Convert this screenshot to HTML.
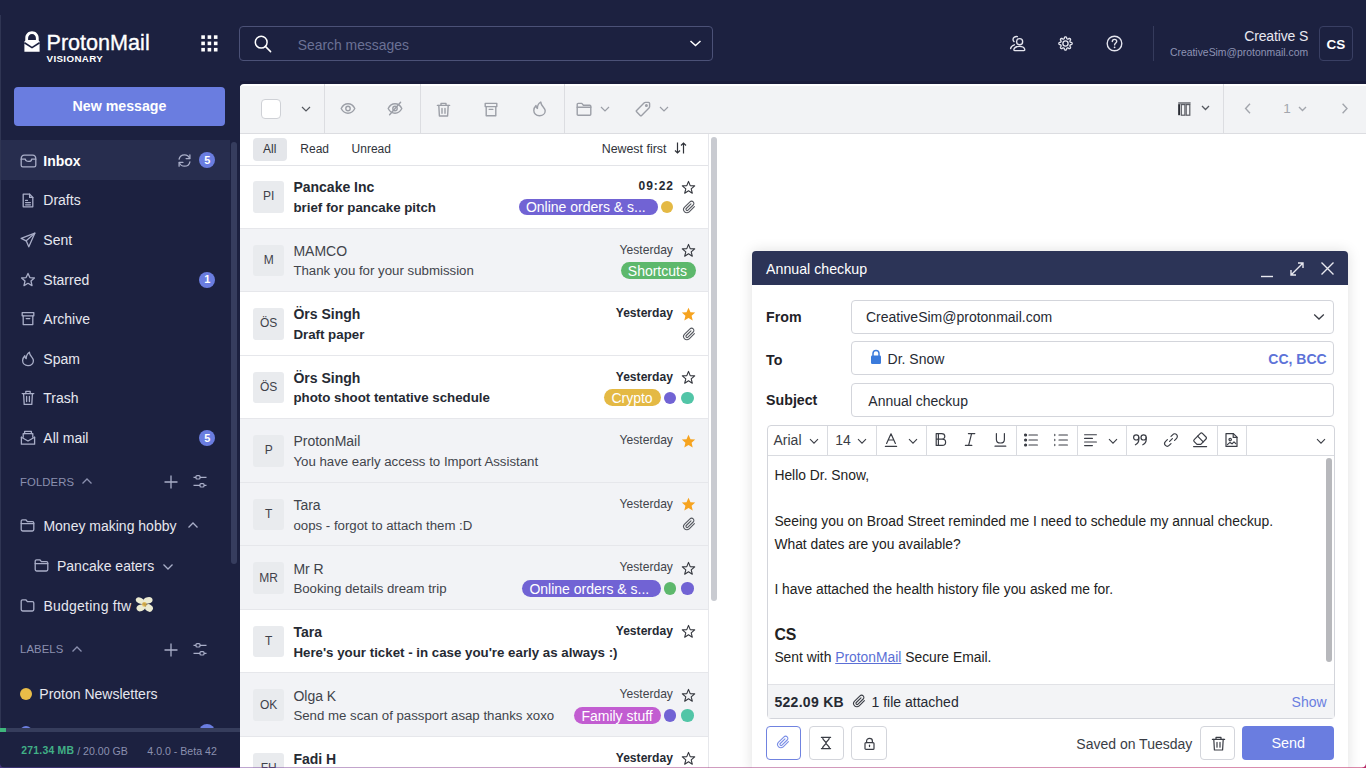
<!DOCTYPE html>
<html><head><meta charset="utf-8">
<style>
*{box-sizing:border-box;margin:0;padding:0}
html,body{width:1366px;height:768px;overflow:hidden;font-family:"Liberation Sans",sans-serif;background:#1c2140;position:relative}
.abs{position:absolute}
svg{display:block}
.t{position:absolute;white-space:nowrap;line-height:1}
</style></head>
<body>
<div class="abs" style="left:0px;top:0px;width:1366px;height:84px;background:#1c2140;"></div>
<svg class="abs" style="left:24px;top:31px;" width="16" height="21" viewBox="0 0 16 21"><path d="M8 0.3C4.2 0.3 1.3 3.2 1.3 6.9V9.6L0.4 10.4V20.7H15.6V10.4L14.7 9.6V6.9C14.7 3.2 11.8 0.3 8 0.3Z" fill="#fff"/>
  <path d="M4.1 8.9V7.1C4.1 4.9 5.8 3.1 8 3.1C10.2 3.1 11.9 4.9 11.9 7.1V8.9Z" fill="#1c2140"/>
  <path d="M0.4 11.8L8 16.6L15.6 11.8" stroke="#1c2140" stroke-width="1.7" fill="none"/></svg>
<div class="t" style="left:46.50px;top:31.92px;font-size:21.6px;color:#fff;font-weight:normal;letter-spacing:0px;-webkit-text-stroke:0.35px #fff">ProtonMail</div>
<div class="t" style="left:46.50px;top:53.50px;font-size:9.8px;color:#fff;font-weight:bold;letter-spacing:0.35px">VISIONARY</div>
<svg class="abs" style="left:201px;top:35px;" width="17" height="17" viewBox="0 0 17 17"><g fill="#fff"><rect x="0.3" y="0.3" width="3.6" height="3.6"/><rect x="6.6" y="0.3" width="3.6" height="3.6"/><rect x="12.9" y="0.3" width="3.6" height="3.6"/><rect x="0.3" y="6.6" width="3.6" height="3.6"/><rect x="6.6" y="6.6" width="3.6" height="3.6"/><rect x="12.9" y="6.6" width="3.6" height="3.6"/><rect x="0.3" y="12.9" width="3.6" height="3.6"/><rect x="6.6" y="12.9" width="3.6" height="3.6"/><rect x="12.9" y="12.9" width="3.6" height="3.6"/></g></svg>
<div class="abs" style="left:239px;top:26px;width:474px;height:35px;border:1px solid #4b5177;border-radius:4px"></div>
<svg class="abs" style="left:254px;top:35px;" width="18" height="18" viewBox="0 0 18 18"><g fill="none" stroke="#fff" stroke-width="1.5"><circle cx="7.2" cy="7.2" r="5.9"/><path d="M11.4 11.4L16.6 16.6" stroke-linecap="round"/></g></svg>
<div class="t" style="left:297.70px;top:39.23px;font-size:13.9px;color:#6b7195;font-weight:normal;">Search messages</div>
<svg class="abs" style="left:689px;top:39px;" width="13" height="9" viewBox="0 0 13 9"><path d="M1.5 2L6.5 6.5L11.5 2" fill="none" stroke="#fff" stroke-width="1.5"/></svg>
<svg class="abs" style="left:1009px;top:35px;" width="18" height="17" viewBox="0 0 18 17"><g fill="none" stroke="#e4e5ee" stroke-width="1.35" stroke-linecap="round">
      <circle cx="10.6" cy="6.7" r="3.05"/><path d="M5.8 15.6H14.8C15.6 15.6 16 15 15.7 14.2C15.1 12.4 13.2 11.4 10.3 11.4C7.4 11.4 5.5 12.4 4.9 14.2C4.6 15 5 15.6 5.8 15.6Z"/>
      <path d="M8.4 1.6C6.2 1.0 4.0 2.6 4.0 4.6C4.0 5.6 4.4 6.2 5.0 6.6"/><path d="M5.4 9.8C3.4 10.4 1.9 11.6 1.6 13.6"/></g></svg>
<svg class="abs" style="left:1057.2px;top:34.8px;" width="17" height="17" viewBox="0 0 17 17"><g fill="none" stroke="#e4e5ee" stroke-width="1.35" stroke-linejoin="round">
      <path d="M15.15 8.50 L15.12 8.76 L15.03 9.01 L14.88 9.25 L14.65 9.47 L14.14 9.62 L13.63 9.73 L13.39 9.88 L13.21 10.03 L13.07 10.19 L12.98 10.36 L12.93 10.54 L12.91 10.75 L12.93 10.98 L13.00 11.26 L13.28 11.69 L13.53 12.16 L13.54 12.48 L13.48 12.75 L13.37 13.00 L13.20 13.20 L13.00 13.37 L12.75 13.48 L12.48 13.54 L12.16 13.53 L11.69 13.28 L11.26 13.00 L10.98 12.93 L10.75 12.91 L10.54 12.93 L10.36 12.98 L10.19 13.07 L10.03 13.21 L9.88 13.39 L9.73 13.63 L9.62 14.14 L9.47 14.65 L9.25 14.88 L9.01 15.03 L8.76 15.12 L8.50 15.15 L8.24 15.12 L7.99 15.03 L7.75 14.88 L7.53 14.65 L7.38 14.14 L7.27 13.63 L7.12 13.39 L6.97 13.21 L6.81 13.07 L6.64 12.98 L6.46 12.93 L6.25 12.91 L6.02 12.93 L5.74 13.00 L5.31 13.28 L4.84 13.53 L4.52 13.54 L4.25 13.48 L4.00 13.37 L3.80 13.20 L3.63 13.00 L3.52 12.75 L3.46 12.48 L3.47 12.16 L3.72 11.69 L4.00 11.26 L4.07 10.98 L4.09 10.75 L4.07 10.54 L4.02 10.36 L3.93 10.19 L3.79 10.03 L3.61 9.88 L3.37 9.73 L2.86 9.62 L2.35 9.47 L2.12 9.25 L1.97 9.01 L1.88 8.76 L1.85 8.50 L1.88 8.24 L1.97 7.99 L2.12 7.75 L2.35 7.53 L2.86 7.38 L3.37 7.27 L3.61 7.12 L3.79 6.97 L3.93 6.81 L4.02 6.64 L4.07 6.46 L4.09 6.25 L4.07 6.02 L4.00 5.74 L3.72 5.31 L3.47 4.84 L3.46 4.52 L3.52 4.25 L3.63 4.00 L3.80 3.80 L4.00 3.63 L4.25 3.52 L4.52 3.46 L4.84 3.47 L5.31 3.72 L5.74 4.00 L6.02 4.07 L6.25 4.09 L6.46 4.07 L6.64 4.02 L6.81 3.93 L6.97 3.79 L7.12 3.61 L7.27 3.37 L7.38 2.86 L7.53 2.35 L7.75 2.12 L7.99 1.97 L8.24 1.88 L8.50 1.85 L8.76 1.88 L9.01 1.97 L9.25 2.12 L9.47 2.35 L9.62 2.86 L9.73 3.37 L9.88 3.61 L10.03 3.79 L10.19 3.93 L10.36 4.02 L10.54 4.07 L10.75 4.09 L10.98 4.07 L11.26 4.00 L11.69 3.72 L12.16 3.47 L12.48 3.46 L12.75 3.52 L13.00 3.63 L13.20 3.80 L13.37 4.00 L13.48 4.25 L13.54 4.52 L13.53 4.84 L13.28 5.31 L13.00 5.74 L12.93 6.02 L12.91 6.25 L12.93 6.46 L12.98 6.64 L13.07 6.81 L13.21 6.97 L13.39 7.12 L13.63 7.27 L14.14 7.38 L14.65 7.53 L14.88 7.75 L15.03 7.99 L15.12 8.24Z"/>
      <circle cx="8.5" cy="8.5" r="2.6"/></g></svg>
<svg class="abs" style="left:1106px;top:35px;" width="17" height="17" viewBox="0 0 17 17"><g fill="none" stroke="#e4e5ee" stroke-width="1.4" stroke-linecap="round">
      <circle cx="8.5" cy="8.5" r="7.3"/><path d="M6.3 6.6C6.3 5.3 7.3 4.4 8.5 4.4C9.7 4.4 10.7 5.3 10.7 6.5C10.7 8 8.6 8.2 8.6 9.9"/></g>
      <circle cx="8.6" cy="12.3" r="0.9" fill="#e4e5ee"/></svg>
<div class="abs" style="left:1153px;top:26px;width:1px;height:35px;background:#353b5c;"></div>
<div class="t" style="right:57.90px;top:29.15px;font-size:14px;color:#e8e8f0;font-weight:normal;letter-spacing:-0.15px">Creative S</div>
<div class="t" style="right:57.90px;top:48.00px;font-size:10.4px;color:#8e93b4;font-weight:normal;">CreativeSim@protonmail.com</div>
<div class="abs" style="left:1319px;top:26px;width:34px;height:35px;border:1px solid #393f63;border-radius:4px"></div>
<div class="t" style="left:1336.00px;transform:translateX(-50%);top:38.27px;font-size:13.5px;color:#fff;font-weight:bold;">CS</div>
<div class="abs" style="left:0px;top:84px;width:240px;height:684px;background:#1c2140;"></div>
<div class="abs" style="left:0px;top:15px;width:1px;height:753px;background:#2f3553;"></div>
<div class="abs" style="left:14px;top:87px;width:211px;height:39px;background:#6a7de0;border-radius:4px"></div>
<div class="t" style="left:119.50px;transform:translateX(-50%);top:98.98px;font-size:14.2px;color:#fff;font-weight:bold;">New message</div>
<div class="abs" style="left:1px;top:140px;width:229px;height:40px;background:#272d4e;"></div>
<div class="abs" style="left:231px;top:142px;width:6px;height:422px;background:#363d5e;border-radius:3px"></div>
<div class="t" style="left:43.30px;top:154.25px;font-size:14px;color:#fff;font-weight:bold;">Inbox</div>
<div class="t" style="left:43.30px;top:193.25px;font-size:14px;color:#e6e7ef;font-weight:normal;">Drafts</div>
<div class="t" style="left:43.30px;top:233.25px;font-size:14px;color:#e6e7ef;font-weight:normal;">Sent</div>
<div class="t" style="left:43.30px;top:272.75px;font-size:14px;color:#e6e7ef;font-weight:normal;">Starred</div>
<div class="t" style="left:43.30px;top:311.85px;font-size:14px;color:#e6e7ef;font-weight:normal;">Archive</div>
<div class="t" style="left:43.30px;top:351.75px;font-size:14px;color:#e6e7ef;font-weight:normal;">Spam</div>
<div class="t" style="left:43.30px;top:391.25px;font-size:14px;color:#e6e7ef;font-weight:normal;">Trash</div>
<div class="t" style="left:43.30px;top:431.25px;font-size:14px;color:#e6e7ef;font-weight:normal;">All mail</div>
<svg class="abs" style="left:20px;top:154px;stroke:#a9aec8" width="17" height="14" viewBox="0 0 17 14"><g fill="none" stroke="#a9aec8" stroke-width="1.3" stroke-linejoin="round" stroke-linecap="round"><path d="M1.2 5.2V11.2C1.2 12.2 1.8 12.8 2.8 12.8H14.2C15.2 12.8 15.8 12.2 15.8 11.2V5.2"/><path d="M1.2 5.2C1.2 3 2.4 1.2 4.4 1.2H12.6C14.6 1.2 15.8 3 15.8 5.2H11.6C11.6 6.4 10.4 7.4 8.5 7.4C6.6 7.4 5.4 6.4 5.4 5.2Z"/></g></svg>
<svg class="abs" style="left:21px;top:193px;" width="14" height="15" viewBox="0 0 14 15"><g fill="none" stroke="#a9aec8" stroke-width="1.3" stroke-linejoin="round" stroke-linecap="round"><path d="M2.2 1.2H8.6L11.8 4.4V13.8H2.2Z"/><path d="M8.6 1.2V4.4H11.8"/><path d="M4.6 7.4H6.4M4.6 9.6H9.4M4.6 11.8H9.4"/></g></svg>
<svg class="abs" style="left:20px;top:232px;" width="16" height="16" viewBox="0 0 16 16"><g fill="none" stroke="#a9aec8" stroke-width="1.3" stroke-linejoin="round" stroke-linecap="round"><path d="M14.8 1.2L1.2 6.4L6.2 8.8L8.8 14.8Z"/><path d="M14.8 1.2L6.2 8.8"/></g></svg>
<svg class="abs" style="left:20px;top:272px;" width="16" height="16" viewBox="0 0 16 16"><g fill="none" stroke="#a9aec8" stroke-width="1.3" stroke-linejoin="round" stroke-linecap="round"><path d="M8 1.4L9.9 5.6L14.4 6L11 9L12 13.6L8 11.3L4 13.6L5 9L1.6 6L6.1 5.6Z"/></g></svg>
<svg class="abs" style="left:21px;top:311px;" width="14" height="15" viewBox="0 0 14 15"><g fill="none" stroke="#a9aec8" stroke-width="1.3" stroke-linejoin="round" stroke-linecap="round"><rect x="1.2" y="1.6" width="11.6" height="3.2"/><path d="M2.2 4.8V13.6H11.8V4.8"/><path d="M5.2 7.6H8.8"/></g></svg>
<svg class="abs" style="left:21px;top:351px;" width="14" height="16" viewBox="0 0 14 16"><g fill="none" stroke="#a9aec8" stroke-width="1.3" stroke-linejoin="round" stroke-linecap="round"><path d="M7 14.6C3.8 14.6 1.6 12.4 1.6 9.6C1.6 7.4 2.6 6 3.8 4.8C3.8 6.4 4.4 7.2 5.2 7.6C5.2 4.6 6.6 2.4 8.4 1.2C8.4 3.4 9.6 4.8 10.8 6.2C11.8 7.4 12.4 8.4 12.4 9.8C12.4 12.6 10.2 14.6 7 14.6Z"/></g></svg>
<svg class="abs" style="left:21px;top:390px;" width="14" height="16" viewBox="0 0 14 16"><g fill="none" stroke="#a9aec8" stroke-width="1.3" stroke-linejoin="round" stroke-linecap="round"><path d="M1.2 3.6H12.8"/><path d="M4.8 3.6V1.4H9.2V3.6"/><path d="M2.6 3.6L3.2 14.4H10.8L11.4 3.6"/><path d="M5.6 6.4V11.6M8.4 6.4V11.6"/></g></svg>
<svg class="abs" style="left:20px;top:430px;" width="16" height="16" viewBox="0 0 16 16"><g fill="none" stroke="#a9aec8" stroke-width="1.3" stroke-linejoin="round" stroke-linecap="round"><path d="M1.4 7.2V14.2H14.6V7.2"/><path d="M1.4 7.2L8 11L14.6 7.2"/><path d="M3.2 7.2V3.6H12.8V7.2"/><path d="M4.6 3.6V1.4H11.4V3.6"/></g></svg>
<svg class="abs" style="left:177px;top:153px;" width="15" height="15" viewBox="0 0 15 15"><g fill="none" stroke="#a9aec8" stroke-width="1.3" stroke-linejoin="round" stroke-linecap="round"><path d="M12.6 5.4C11.8 3.2 9.8 1.8 7.5 1.8C4.8 1.8 2.6 3.7 2.1 6.2"/><path d="M12.9 1.8V5.6H9.1"/><path d="M2.4 9.6C3.2 11.8 5.2 13.2 7.5 13.2C10.2 13.2 12.4 11.3 12.9 8.8"/><path d="M2.1 13.2V9.4H5.9"/></g></svg>
<div class="abs" style="left:199.2px;top:152px;width:16px;height:16px;border-radius:8px;background:#6a7de0"></div>
<div class="t" style="left:207.20px;transform:translateX(-50%);top:154.69px;font-size:11px;color:#fff;font-weight:bold;">5</div>
<div class="abs" style="left:199.2px;top:271.5px;width:16px;height:16px;border-radius:8px;background:#6a7de0"></div>
<div class="t" style="left:207.20px;transform:translateX(-50%);top:274.19px;font-size:11px;color:#fff;font-weight:bold;">1</div>
<div class="abs" style="left:199.2px;top:430px;width:16px;height:16px;border-radius:8px;background:#6a7de0"></div>
<div class="t" style="left:207.20px;transform:translateX(-50%);top:432.69px;font-size:11px;color:#fff;font-weight:bold;">5</div>
<div class="t" style="left:20.00px;top:476.63px;font-size:11.3px;color:#8b90af;font-weight:normal;letter-spacing:0.1px">FOLDERS</div>
<svg class="abs" style="left:81px;top:477px;" width="12" height="8" viewBox="0 0 12 8"><path d="M1.5 6.5L6 2L10.5 6.5" fill="none" stroke="#8b90af" stroke-width="1.3"/></svg>
<svg class="abs" style="left:163px;top:474px;" width="16" height="16" viewBox="0 0 16 16"><path d="M8 1.5V14.5M1.5 8H14.5" fill="none" stroke="#a9aec8" stroke-width="1.3"/></svg>
<svg class="abs" style="left:192px;top:474px;" width="16" height="16" viewBox="0 0 16 16"><g fill="none" stroke="#a9aec8" stroke-width="1.2"><rect x="4" y="1.6" width="4" height="3.4" rx="1"/><path d="M8 3.3H14.5M1.5 3.3H4"/><rect x="8" y="9.6" width="4" height="3.4" rx="1"/><path d="M12 11.3H14.5M1.5 11.3H8"/></g></svg>
<div class="t" style="left:43.40px;top:519.05px;font-size:14px;color:#e6e7ef;font-weight:normal;">Money making hobby</div>
<div class="t" style="left:57.00px;top:559.25px;font-size:14px;color:#e6e7ef;font-weight:normal;">Pancake eaters</div>
<div class="t" style="left:43.40px;top:598.95px;font-size:14px;color:#e6e7ef;font-weight:normal;letter-spacing:0.25px">Budgeting ftw</div>
<svg class="abs" style="left:187px;top:521px;" width="12" height="8" viewBox="0 0 12 8"><path d="M1.5 6.5L6 2L10.5 6.5" fill="none" stroke="#a9aec8" stroke-width="1.3"/></svg>
<svg class="abs" style="left:162px;top:563px;" width="12" height="8" viewBox="0 0 12 8"><path d="M1.5 1.5L6 6L10.5 1.5" fill="none" stroke="#a9aec8" stroke-width="1.3"/></svg>
<svg class="abs" style="left:20px;top:518px;" width="15" height="15" viewBox="0 0 15 15"><g fill="none" stroke="#a9aec8" stroke-width="1.3" stroke-linejoin="round" stroke-linecap="round"><path d="M1.2 3.2C1.2 2.4 1.8 1.8 2.6 1.8H5.8L7.4 3.6H12.4C13.2 3.6 13.8 4.2 13.8 5V11.6C13.8 12.4 13.2 13 12.4 13H2.6C1.8 13 1.2 12.4 1.2 11.6Z"/><path d="M1.2 5.6H13.8"/></g></svg>
<svg class="abs" style="left:34px;top:558px;" width="15" height="15" viewBox="0 0 15 15"><g fill="none" stroke="#a9aec8" stroke-width="1.3" stroke-linejoin="round" stroke-linecap="round"><path d="M1.2 3.2C1.2 2.4 1.8 1.8 2.6 1.8H5.8L7.4 3.6H12.4C13.2 3.6 13.8 4.2 13.8 5V11.6C13.8 12.4 13.2 13 12.4 13H2.6C1.8 13 1.2 12.4 1.2 11.6Z"/><path d="M1.2 5.6H13.8"/></g></svg>
<svg class="abs" style="left:20px;top:598px;" width="15" height="15" viewBox="0 0 15 15"><g fill="none" stroke="#a9aec8" stroke-width="1.3" stroke-linejoin="round" stroke-linecap="round"><path d="M1.2 3.2C1.2 2.4 1.8 1.8 2.6 1.8H5.8L7.4 3.6H12.4C13.2 3.6 13.8 4.2 13.8 5V11.6C13.8 12.4 13.2 13 12.4 13H2.6C1.8 13 1.2 12.4 1.2 11.6Z"/></g></svg>
<svg class="abs" style="left:135px;top:596px;" width="19" height="17" viewBox="0 0 19 17"><g fill="#ecebd2">
      <ellipse cx="5" cy="4.6" rx="4.4" ry="3" transform="rotate(25 5 4.6)"/>
      <ellipse cx="13" cy="4.4" rx="4.6" ry="3.2" transform="rotate(-10 13 4.4)"/>
      <ellipse cx="5.8" cy="11.8" rx="4.4" ry="3.3" transform="rotate(-20 5.8 11.8)"/>
      <ellipse cx="14" cy="12" rx="4" ry="3.6" transform="rotate(30 14 12)"/></g>
      <circle cx="9.4" cy="8.4" r="2.3" fill="#e3b647" opacity="0.85"/></svg>
<div class="t" style="left:20.00px;top:644.03px;font-size:11.3px;color:#8b90af;font-weight:normal;letter-spacing:0.1px">LABELS</div>
<svg class="abs" style="left:71px;top:645px;" width="12" height="8" viewBox="0 0 12 8"><path d="M1.5 6.5L6 2L10.5 6.5" fill="none" stroke="#8b90af" stroke-width="1.3"/></svg>
<svg class="abs" style="left:163px;top:642px;" width="16" height="16" viewBox="0 0 16 16"><path d="M8 1.5V14.5M1.5 8H14.5" fill="none" stroke="#a9aec8" stroke-width="1.3"/></svg>
<svg class="abs" style="left:192px;top:642px;" width="16" height="16" viewBox="0 0 16 16"><g fill="none" stroke="#a9aec8" stroke-width="1.2"><rect x="4" y="1.6" width="4" height="3.4" rx="1"/><path d="M8 3.3H14.5M1.5 3.3H4"/><rect x="8" y="9.6" width="4" height="3.4" rx="1"/><path d="M12 11.3H14.5M1.5 11.3H8"/></g></svg>
<div class="abs" style="left:20px;top:687.5px;width:12.4px;height:12.4px;border-radius:50%;background:#e9bd48"></div>
<div class="t" style="left:39.30px;top:686.85px;font-size:14px;color:#e6e7ef;font-weight:normal;">Proton Newsletters</div>
<div class="abs" style="left:20px;top:726px;width:12.4px;height:12.4px;border-radius:50%;background:#6d7fe0"></div>
<div class="abs" style="left:199px;top:724px;width:16px;height:16px;border-radius:50%;background:#6a7de0"></div>
<div class="abs" style="left:0px;top:728px;width:240px;height:40px;background:#1c2140;"></div>
<div class="abs" style="left:0px;top:728px;width:240px;height:4px;background:#363d5c;"></div>
<div class="abs" style="left:0px;top:728px;width:6px;height:4px;background:#3fb67c;"></div>
<div class="t" style="left:21.20px;top:745.80px;font-size:10.4px;color:#41b086;font-weight:bold;letter-spacing:0.25px">271.34 MB</div>
<div class="t" style="left:77.20px;top:745.63px;font-size:10.6px;color:#8b90af;font-weight:normal;">/ 20.00 GB</div>
<div class="t" style="left:147.30px;top:745.63px;font-size:10.6px;color:#8b90af;font-weight:normal;">4.0.0 - Beta 42</div>
<div class="abs" style="left:240px;top:81px;width:1126px;height:3px;background:#191c3a;"></div>
<div class="abs" style="left:240px;top:84px;width:1126px;height:684px;background:#fff;border-top-left-radius:4px;overflow:hidden">
<div class="abs" style="left:0;top:2px;width:1126px;height:48px;background:#f2f3f5;border-bottom:1px solid #dcdde1"></div>
</div>
<div class="abs" style="left:260.5px;top:98.5px;width:20px;height:20px;background:#fff;border:1px solid #cfd1d6;border-radius:4px"></div>
<svg class="abs" style="left:300.5px;top:105.5px;" width="10" height="6" viewBox="0 0 10 6"><path d="M1 1L5 5L9 1" fill="none" stroke="#55585f" stroke-width="1.2"/></svg>
<div class="abs" style="left:324px;top:84px;width:1px;height:49px;background:#dcdde1;"></div>
<div class="abs" style="left:419.5px;top:84px;width:1px;height:49px;background:#dcdde1;"></div>
<div class="abs" style="left:563.5px;top:84px;width:1px;height:49px;background:#dcdde1;"></div>
<div class="abs" style="left:1223.3px;top:84px;width:1px;height:49px;background:#dcdde1;"></div>
<svg class="abs" style="left:340px;top:102px;" width="16" height="13" viewBox="0 0 16 13"><g fill="none" stroke="#9c9fa7" stroke-width="1.4" stroke-linecap="round" stroke-linejoin="round"><path d="M1.2 6.5C2.8 3.4 5.2 1.8 8 1.8C10.8 1.8 13.2 3.4 14.8 6.5C13.2 9.6 10.8 11.2 8 11.2C5.2 11.2 2.8 9.6 1.2 6.5Z"/><circle cx="8" cy="6.5" r="2.2"/></g></svg>
<svg class="abs" style="left:387px;top:101px;" width="16" height="15" viewBox="0 0 16 15"><g fill="none" stroke="#9c9fa7" stroke-width="1.4" stroke-linecap="round" stroke-linejoin="round"><path d="M1.2 7.5C2.8 4.4 5.2 2.8 8 2.8C10.8 2.8 13.2 4.4 14.8 7.5C13.2 10.6 10.8 12.2 8 12.2C5.2 12.2 2.8 10.6 1.2 7.5Z"/><circle cx="8" cy="7.5" r="2.2"/><path d="M13.6 1.2L2.6 13.8"/></g></svg>
<svg class="abs" style="left:436px;top:102px;" width="15" height="15" viewBox="0 0 15 15"><g fill="none" stroke="#9c9fa7" stroke-width="1.4" stroke-linecap="round" stroke-linejoin="round"><path d="M1.4 3.4H13.6"/><path d="M5 3.4V1.4H10V3.4"/><path d="M2.8 3.4L3.4 14H11.6L12.2 3.4"/><path d="M6 6.4V11.2M9 6.4V11.2"/></g></svg>
<svg class="abs" style="left:484px;top:102px;" width="14" height="15" viewBox="0 0 14 15"><g fill="none" stroke="#9c9fa7" stroke-width="1.4" stroke-linecap="round" stroke-linejoin="round"><rect x="1.2" y="1.4" width="11.6" height="3.2"/><path d="M2.2 4.6V13.8H11.8V4.6"/><path d="M5.2 7.4H8.8"/></g></svg>
<svg class="abs" style="left:532px;top:101px;" width="15" height="16" viewBox="0 0 15 16"><g fill="none" stroke="#9c9fa7" stroke-width="1.4" stroke-linecap="round" stroke-linejoin="round"><path d="M7.5 14.8C4.2 14.8 1.8 12.6 1.8 9.6C1.8 7.4 2.8 5.8 4 4.6C4 6.2 4.6 7 5.4 7.4C5.4 4.4 6.8 2.2 8.8 1C8.8 3.2 10 4.6 11.2 6C12.2 7.2 13.2 8.4 13.2 9.8C13.2 12.6 10.8 14.8 7.5 14.8Z"/></g></svg>
<svg class="abs" style="left:576px;top:102px;" width="16" height="14" viewBox="0 0 16 14"><g fill="none" stroke="#9c9fa7" stroke-width="1.4" stroke-linecap="round" stroke-linejoin="round"><path d="M1.2 2.4C1.2 1.8 1.6 1.4 2.2 1.4H5.8L7.4 3.2H13.8C14.4 3.2 14.8 3.6 14.8 4.2V12.2C14.8 12.8 14.4 13.2 13.8 13.2H2.2C1.6 13.2 1.2 12.8 1.2 12.2Z"/><path d="M1.2 5.2H14.8"/></g></svg>
<svg class="abs" style="left:600px;top:105.5px;" width="10" height="6" viewBox="0 0 10 6"><path d="M1 1L5 5L9 1" fill="none" stroke="#9c9fa7" stroke-width="1.2"/></svg>
<svg class="abs" style="left:635px;top:101px;" width="16" height="16" viewBox="0 0 16 16"><g fill="none" stroke="#9c9fa7" stroke-width="1.4" stroke-linecap="round" stroke-linejoin="round"><path d="M1.6 9.4L9 2C9.4 1.6 9.8 1.4 10.4 1.4H13.6C14.2 1.4 14.6 1.8 14.6 2.4V5.6C14.6 6.2 14.4 6.6 14 7L6.6 14.4C6.2 14.8 5.6 14.8 5.2 14.4L1.6 10.8C1.2 10.4 1.2 9.8 1.6 9.4Z"/><circle cx="11.4" cy="4.6" r="0.8"/></g></svg>
<svg class="abs" style="left:659px;top:105.5px;" width="10" height="6" viewBox="0 0 10 6"><path d="M1 1L5 5L9 1" fill="none" stroke="#9c9fa7" stroke-width="1.2"/></svg>
<svg class="abs" style="left:1177px;top:101px;" width="15" height="16" viewBox="0 0 15 16"><rect x="1.2" y="1" width="12.4" height="2.4" fill="#8a8c92"/><path d="M2.1 3.2V14.2" stroke="#2a2c33" stroke-width="1.9"/><rect x="4.3" y="3.6" width="3.6" height="10.6" fill="none" stroke="#5a5c63" stroke-width="1.2"/><rect x="9.2" y="3.6" width="3.6" height="10.6" fill="none" stroke="#5a5c63" stroke-width="1.2"/></svg>
<svg class="abs" style="left:1200.5px;top:105px;" width="9" height="6" viewBox="0 0 9 6"><path d="M1 1L4.5 4.5L8 1" fill="none" stroke="#55585f" stroke-width="1.3"/></svg>
<svg class="abs" style="left:1243.5px;top:103px;" width="8" height="11" viewBox="0 0 8 11"><path d="M6 0.8L1.6 5.5L6 10.2" fill="none" stroke="#a3a6ad" stroke-width="1.4"/></svg>
<div class="t" style="left:1287.00px;transform:translateX(-50%);top:101.77px;font-size:13.5px;color:#a3a6ad;font-weight:normal;">1</div>
<svg class="abs" style="left:1298px;top:105.5px;" width="9" height="6" viewBox="0 0 9 6"><path d="M1 1L4.5 4.5L8 1" fill="none" stroke="#a3a6ad" stroke-width="1.4"/></svg>
<svg class="abs" style="left:1340.5px;top:103px;" width="8" height="11" viewBox="0 0 8 11"><path d="M1.6 0.8L6 5.5L1.6 10.2" fill="none" stroke="#a3a6ad" stroke-width="1.4"/></svg>
<div class="abs" style="left:240px;top:134px;width:468px;height:31px;background:#fff;"></div>
<div class="abs" style="left:253px;top:138px;width:34px;height:22.5px;background:#e4e6ea;border-radius:4px"></div>
<div class="t" style="left:269.70px;transform:translateX(-50%);top:143.04px;font-size:12px;color:#30333a;font-weight:normal;">All</div>
<div class="t" style="left:300.30px;top:143.04px;font-size:12px;color:#30333a;font-weight:normal;">Read</div>
<div class="t" style="left:351.60px;top:143.04px;font-size:12px;color:#30333a;font-weight:normal;">Unread</div>
<div class="t" style="right:699.60px;top:142.70px;font-size:12.4px;color:#30333a;font-weight:normal;">Newest first</div>
<svg class="abs" style="left:674px;top:141px;" width="13" height="14" viewBox="0 0 13 14"><g fill="none" stroke="#30333a" stroke-width="1.2"><path d="M3.5 1.5V12M1 9.5L3.5 12L6 9.5"/><path d="M9.5 12.5V2M7 4.5L9.5 2L12 4.5"/></g></svg>
<div class="abs" style="left:708px;top:134px;width:1px;height:634px;background:#e6e7eb;"></div>
<div class="abs" style="left:709px;top:134px;width:11px;height:634px;background:#fff;"></div>
<div class="abs" style="left:711px;top:137px;width:5.5px;height:464px;background:#c9cbd1;border-radius:3px"></div>
<div class="abs" style="left:240px;top:165.10px;width:468px;height:63.53px;background:#fff;border-bottom:1px solid #e6e7eb"></div>
<div class="abs" style="left:253.3px;top:181.10px;width:30.6px;height:31.5px;background:#e9ebee;border-radius:3px"></div>
<div class="t" style="left:268.70px;transform:translateX(-50%);top:190.34px;font-size:12px;color:#3f424a;font-weight:normal;">PI</div>
<div class="t" style="left:293.40px;top:180.35px;font-size:14px;color:#262a33;font-weight:bold;">Pancake Inc</div>
<div class="t" style="left:293.40px;top:200.84px;font-size:13.3px;color:#262a33;font-weight:bold;">brief for pancake pitch</div>
<div class="t" style="right:693.10px;top:180.24px;font-size:12px;color:#262a33;font-weight:bold;letter-spacing:0.9px;margin-right:-0.9px">09:22</div>
<svg class="abs" style="left:681px;top:179.6px;" width="15" height="15" viewBox="0 0 15 15"><path d="M7.5 1.4L9.2 5.6L13.7 5.9L10.2 8.8L11.3 13.2L7.5 10.8L3.7 13.2L4.8 8.8L1.3 5.9L5.8 5.6Z" fill="none" stroke="#33363d" stroke-width="1.1" stroke-linejoin="round"/></svg>
<svg class="abs" style="left:681.5px;top:199.6px;" width="15" height="15" viewBox="0 0 15 15"><path d="M12.4 6.6L7.2 11.8C5.9 13.1 3.8 13.1 2.6 11.8C1.3 10.5 1.3 8.5 2.6 7.2L8 1.8C8.9 0.9 10.3 0.9 11.2 1.8C12.1 2.7 12.1 4.1 11.2 5L6 10.2C5.5 10.7 4.8 10.7 4.3 10.2C3.8 9.7 3.8 9 4.3 8.5L9 3.8" fill="none" stroke="#55585f" stroke-width="1.1" stroke-linecap="round"/></svg>
<div class="abs" style="left:518.6px;top:198.7px;width:139.5px;height:16.8px;border-radius:8.4px;background:#7163d4"></div>
<div class="t" style="left:525.90px;top:200.35px;font-size:14px;color:#fff;font-weight:normal;">Online orders &amp; s...</div>
<div class="abs" style="left:660.6px;top:201.1px;width:12.4px;height:12.4px;border-radius:50%;background:#e4b944"></div>
<div class="abs" style="left:240px;top:228.63px;width:468px;height:63.53px;background:#f2f3f6;border-bottom:1px solid #e6e7eb"></div>
<div class="abs" style="left:253.3px;top:244.63px;width:30.6px;height:31.5px;background:#e9ebee;border-radius:3px"></div>
<div class="t" style="left:268.70px;transform:translateX(-50%);top:253.87px;font-size:12px;color:#3f424a;font-weight:normal;">M</div>
<div class="t" style="left:293.40px;top:243.88px;font-size:14px;color:#41444b;font-weight:normal;">MAMCO</div>
<div class="t" style="left:293.40px;top:264.41px;font-size:13.25px;color:#41444b;font-weight:normal;">Thank you for your submission</div>
<div class="t" style="right:693.10px;top:243.69px;font-size:12.1px;color:#41444b;font-weight:normal;">Yesterday</div>
<svg class="abs" style="left:681px;top:243.13px;" width="15" height="15" viewBox="0 0 15 15"><path d="M7.5 1.4L9.2 5.6L13.7 5.9L10.2 8.8L11.3 13.2L7.5 10.8L3.7 13.2L4.8 8.8L1.3 5.9L5.8 5.6Z" fill="none" stroke="#33363d" stroke-width="1.1" stroke-linejoin="round"/></svg>
<div class="abs" style="left:620.5px;top:262.2px;width:75.2px;height:16.8px;border-radius:8.4px;background:#5db86c"></div>
<div class="t" style="left:627.80px;top:263.88px;font-size:14px;color:#fff;font-weight:normal;">Shortcuts</div>
<div class="abs" style="left:240px;top:292.16px;width:468px;height:63.53px;background:#fff;border-bottom:1px solid #e6e7eb"></div>
<div class="abs" style="left:253.3px;top:308.16px;width:30.6px;height:31.5px;background:#e9ebee;border-radius:3px"></div>
<div class="t" style="left:268.70px;transform:translateX(-50%);top:317.40px;font-size:12px;color:#3f424a;font-weight:normal;">ÖS</div>
<div class="t" style="left:293.40px;top:307.41px;font-size:14px;color:#262a33;font-weight:bold;">Örs Singh</div>
<div class="t" style="left:293.40px;top:327.90px;font-size:13.3px;color:#262a33;font-weight:bold;">Draft paper</div>
<div class="t" style="right:693.10px;top:307.22px;font-size:12.1px;color:#262a33;font-weight:bold;">Yesterday</div>
<svg class="abs" style="left:681px;top:306.65999999999997px;" width="15" height="15" viewBox="0 0 15 15"><path d="M7.5 0.8L9.5 5.2L14.2 5.6L10.6 8.8L11.7 13.5L7.5 11L3.3 13.5L4.4 8.8L0.8 5.6L5.5 5.2Z" fill="#f6a31f"/></svg>
<svg class="abs" style="left:681.5px;top:326.65999999999997px;" width="15" height="15" viewBox="0 0 15 15"><path d="M12.4 6.6L7.2 11.8C5.9 13.1 3.8 13.1 2.6 11.8C1.3 10.5 1.3 8.5 2.6 7.2L8 1.8C8.9 0.9 10.3 0.9 11.2 1.8C12.1 2.7 12.1 4.1 11.2 5L6 10.2C5.5 10.7 4.8 10.7 4.3 10.2C3.8 9.7 3.8 9 4.3 8.5L9 3.8" fill="none" stroke="#55585f" stroke-width="1.1" stroke-linecap="round"/></svg>
<div class="abs" style="left:240px;top:355.69px;width:468px;height:63.53px;background:#fff;border-bottom:1px solid #e6e7eb"></div>
<div class="abs" style="left:253.3px;top:371.69px;width:30.6px;height:31.5px;background:#e9ebee;border-radius:3px"></div>
<div class="t" style="left:268.70px;transform:translateX(-50%);top:380.93px;font-size:12px;color:#3f424a;font-weight:normal;">ÖS</div>
<div class="t" style="left:293.40px;top:370.94px;font-size:14px;color:#262a33;font-weight:bold;">Örs Singh</div>
<div class="t" style="left:293.40px;top:391.43px;font-size:13.3px;color:#262a33;font-weight:bold;">photo shoot tentative schedule</div>
<div class="t" style="right:693.10px;top:370.75px;font-size:12.1px;color:#262a33;font-weight:bold;">Yesterday</div>
<svg class="abs" style="left:681px;top:370.19px;" width="15" height="15" viewBox="0 0 15 15"><path d="M7.5 1.4L9.2 5.6L13.7 5.9L10.2 8.8L11.3 13.2L7.5 10.8L3.7 13.2L4.8 8.8L1.3 5.9L5.8 5.6Z" fill="none" stroke="#33363d" stroke-width="1.1" stroke-linejoin="round"/></svg>
<div class="abs" style="left:604.1px;top:389.3px;width:57.1px;height:16.8px;border-radius:8.4px;background:#e4b944"></div>
<div class="t" style="left:611.40px;top:390.94px;font-size:14px;color:#fff;font-weight:normal;">Crypto</div>
<div class="abs" style="left:663.7px;top:391.7px;width:12.4px;height:12.4px;border-radius:50%;background:#7163d4"></div>
<div class="abs" style="left:681.2px;top:391.7px;width:12.4px;height:12.4px;border-radius:50%;background:#52c5a7"></div>
<div class="abs" style="left:240px;top:419.22px;width:468px;height:63.53px;background:#f2f3f6;border-bottom:1px solid #e6e7eb"></div>
<div class="abs" style="left:253.3px;top:435.22px;width:30.6px;height:31.5px;background:#e9ebee;border-radius:3px"></div>
<div class="t" style="left:268.70px;transform:translateX(-50%);top:444.46px;font-size:12px;color:#3f424a;font-weight:normal;">P</div>
<div class="t" style="left:293.40px;top:434.47px;font-size:14px;color:#41444b;font-weight:normal;">ProtonMail</div>
<div class="t" style="left:293.40px;top:455.00px;font-size:13.25px;color:#41444b;font-weight:normal;">You have early access to Import Assistant</div>
<div class="t" style="right:693.10px;top:434.28px;font-size:12.1px;color:#41444b;font-weight:normal;">Yesterday</div>
<svg class="abs" style="left:681px;top:433.72px;" width="15" height="15" viewBox="0 0 15 15"><path d="M7.5 0.8L9.5 5.2L14.2 5.6L10.6 8.8L11.7 13.5L7.5 11L3.3 13.5L4.4 8.8L0.8 5.6L5.5 5.2Z" fill="#f6a31f"/></svg>
<div class="abs" style="left:240px;top:482.75px;width:468px;height:63.53px;background:#f2f3f6;border-bottom:1px solid #e6e7eb"></div>
<div class="abs" style="left:253.3px;top:498.75px;width:30.6px;height:31.5px;background:#e9ebee;border-radius:3px"></div>
<div class="t" style="left:268.70px;transform:translateX(-50%);top:507.99px;font-size:12px;color:#3f424a;font-weight:normal;">T</div>
<div class="t" style="left:293.40px;top:498.00px;font-size:14px;color:#41444b;font-weight:normal;">Tara</div>
<div class="t" style="left:293.40px;top:518.53px;font-size:13.25px;color:#41444b;font-weight:normal;">oops - forgot to attach them :D</div>
<div class="t" style="right:693.10px;top:497.81px;font-size:12.1px;color:#41444b;font-weight:normal;">Yesterday</div>
<svg class="abs" style="left:681px;top:497.25px;" width="15" height="15" viewBox="0 0 15 15"><path d="M7.5 0.8L9.5 5.2L14.2 5.6L10.6 8.8L11.7 13.5L7.5 11L3.3 13.5L4.4 8.8L0.8 5.6L5.5 5.2Z" fill="#f6a31f"/></svg>
<svg class="abs" style="left:681.5px;top:517.25px;" width="15" height="15" viewBox="0 0 15 15"><path d="M12.4 6.6L7.2 11.8C5.9 13.1 3.8 13.1 2.6 11.8C1.3 10.5 1.3 8.5 2.6 7.2L8 1.8C8.9 0.9 10.3 0.9 11.2 1.8C12.1 2.7 12.1 4.1 11.2 5L6 10.2C5.5 10.7 4.8 10.7 4.3 10.2C3.8 9.7 3.8 9 4.3 8.5L9 3.8" fill="none" stroke="#55585f" stroke-width="1.1" stroke-linecap="round"/></svg>
<div class="abs" style="left:240px;top:546.28px;width:468px;height:63.53px;background:#f2f3f6;border-bottom:1px solid #e6e7eb"></div>
<div class="abs" style="left:253.3px;top:562.28px;width:30.6px;height:31.5px;background:#e9ebee;border-radius:3px"></div>
<div class="t" style="left:268.70px;transform:translateX(-50%);top:571.52px;font-size:12px;color:#3f424a;font-weight:normal;">MR</div>
<div class="t" style="left:293.40px;top:561.53px;font-size:14px;color:#41444b;font-weight:normal;">Mr R</div>
<div class="t" style="left:293.40px;top:582.06px;font-size:13.25px;color:#41444b;font-weight:normal;">Booking details dream trip</div>
<div class="t" style="right:693.10px;top:561.34px;font-size:12.1px;color:#41444b;font-weight:normal;">Yesterday</div>
<svg class="abs" style="left:681px;top:560.78px;" width="15" height="15" viewBox="0 0 15 15"><path d="M7.5 1.4L9.2 5.6L13.7 5.9L10.2 8.8L11.3 13.2L7.5 10.8L3.7 13.2L4.8 8.8L1.3 5.9L5.8 5.6Z" fill="none" stroke="#33363d" stroke-width="1.1" stroke-linejoin="round"/></svg>
<div class="abs" style="left:522.1px;top:579.9px;width:139.1px;height:16.8px;border-radius:8.4px;background:#7163d4"></div>
<div class="t" style="left:529.40px;top:581.53px;font-size:14px;color:#fff;font-weight:normal;">Online orders &amp; s...</div>
<div class="abs" style="left:663.7px;top:582.3px;width:12.4px;height:12.4px;border-radius:50%;background:#5db86c"></div>
<div class="abs" style="left:681.2px;top:582.3px;width:12.4px;height:12.4px;border-radius:50%;background:#7163d4"></div>
<div class="abs" style="left:240px;top:609.81px;width:468px;height:63.53px;background:#fff;border-bottom:1px solid #e6e7eb"></div>
<div class="abs" style="left:253.3px;top:625.81px;width:30.6px;height:31.5px;background:#e9ebee;border-radius:3px"></div>
<div class="t" style="left:268.70px;transform:translateX(-50%);top:635.05px;font-size:12px;color:#3f424a;font-weight:normal;">T</div>
<div class="t" style="left:293.40px;top:625.06px;font-size:14px;color:#262a33;font-weight:bold;">Tara</div>
<div class="t" style="left:293.40px;top:645.55px;font-size:13.3px;color:#262a33;font-weight:bold;">Here's your ticket - in case you're early as always :)</div>
<div class="t" style="right:693.10px;top:624.87px;font-size:12.1px;color:#262a33;font-weight:bold;">Yesterday</div>
<svg class="abs" style="left:681px;top:624.3100000000001px;" width="15" height="15" viewBox="0 0 15 15"><path d="M7.5 1.4L9.2 5.6L13.7 5.9L10.2 8.8L11.3 13.2L7.5 10.8L3.7 13.2L4.8 8.8L1.3 5.9L5.8 5.6Z" fill="none" stroke="#33363d" stroke-width="1.1" stroke-linejoin="round"/></svg>
<div class="abs" style="left:240px;top:673.34px;width:468px;height:63.53px;background:#f2f3f6;border-bottom:1px solid #e6e7eb"></div>
<div class="abs" style="left:253.3px;top:689.34px;width:30.6px;height:31.5px;background:#e9ebee;border-radius:3px"></div>
<div class="t" style="left:268.70px;transform:translateX(-50%);top:698.58px;font-size:12px;color:#3f424a;font-weight:normal;">OK</div>
<div class="t" style="left:293.40px;top:688.59px;font-size:14px;color:#41444b;font-weight:normal;">Olga K</div>
<div class="t" style="left:293.40px;top:709.12px;font-size:13.25px;color:#41444b;font-weight:normal;">Send me scan of passport asap thanks xoxo</div>
<div class="t" style="right:693.10px;top:688.40px;font-size:12.1px;color:#41444b;font-weight:normal;">Yesterday</div>
<svg class="abs" style="left:681px;top:687.84px;" width="15" height="15" viewBox="0 0 15 15"><path d="M7.5 1.4L9.2 5.6L13.7 5.9L10.2 8.8L11.3 13.2L7.5 10.8L3.7 13.2L4.8 8.8L1.3 5.9L5.8 5.6Z" fill="none" stroke="#33363d" stroke-width="1.1" stroke-linejoin="round"/></svg>
<div class="abs" style="left:574.1px;top:706.9px;width:87.1px;height:16.8px;border-radius:8.4px;background:#c25dd1"></div>
<div class="t" style="left:581.40px;top:708.59px;font-size:14px;color:#fff;font-weight:normal;">Family stuff</div>
<div class="abs" style="left:663.7px;top:709.3px;width:12.4px;height:12.4px;border-radius:50%;background:#7163d4"></div>
<div class="abs" style="left:681.2px;top:709.3px;width:12.4px;height:12.4px;border-radius:50%;background:#52c5a7"></div>
<div class="abs" style="left:240px;top:736.87px;width:468px;height:63.53px;background:#fff;border-bottom:1px solid #e6e7eb"></div>
<div class="abs" style="left:253.3px;top:752.87px;width:30.6px;height:31.5px;background:#e9ebee;border-radius:3px"></div>
<div class="t" style="left:268.70px;transform:translateX(-50%);top:762.11px;font-size:12px;color:#3f424a;font-weight:normal;">FH</div>
<div class="t" style="left:293.40px;top:752.12px;font-size:14px;color:#262a33;font-weight:bold;">Fadi H</div>
<div class="t" style="left:293.40px;top:772.61px;font-size:13.3px;color:#262a33;font-weight:bold;"></div>
<div class="t" style="right:693.10px;top:751.93px;font-size:12.1px;color:#262a33;font-weight:bold;">Yesterday</div>
<svg class="abs" style="left:681px;top:751.37px;" width="15" height="15" viewBox="0 0 15 15"><path d="M7.5 1.4L9.2 5.6L13.7 5.9L10.2 8.8L11.3 13.2L7.5 10.8L3.7 13.2L4.8 8.8L1.3 5.9L5.8 5.6Z" fill="none" stroke="#33363d" stroke-width="1.1" stroke-linejoin="round"/></svg>
<div class="abs" style="left:240px;top:164.6px;width:468px;height:1px;background:#e3e4e8;"></div>
<div class="abs" style="left:720px;top:134px;width:646px;height:634px;background:#fff;"></div>
<div class="abs" style="left:752.4px;top:250.5px;width:596.1px;height:520px;background:#fff;border-radius:4px 4px 0 0;box-shadow:0 0 14px rgba(0,0,0,0.13)"></div>
<div class="abs" style="left:752.4px;top:250.5px;width:596.1px;height:34.5px;background:#2c3457;border-radius:4px 4px 0 0"></div>
<div class="t" style="left:766.10px;top:262.38px;font-size:14.2px;color:#fff;font-weight:normal;">Annual checkup</div>
<svg class="abs" style="left:1260px;top:266px;" width="14" height="12" viewBox="0 0 14 12"><path d="M1 10.5H13" stroke="#e8e9f0" stroke-width="1.4"/></svg>
<svg class="abs" style="left:1289px;top:261px;" width="16" height="16" viewBox="0 0 16 16"><g fill="none" stroke="#e8e9f0" stroke-width="1.4"><path d="M2 14L14 2M9 2H14V7M2 9V14H7"/></g></svg>
<svg class="abs" style="left:1320px;top:261px;" width="15" height="15" viewBox="0 0 15 15"><path d="M1.5 1.5L13.5 13.5M13.5 1.5L1.5 13.5" fill="none" stroke="#e8e9f0" stroke-width="1.4"/></svg>
<div class="t" style="left:766.10px;top:309.58px;font-size:14.2px;color:#1f2228;font-weight:bold;">From</div>
<div class="t" style="left:766.10px;top:352.68px;font-size:14.2px;color:#1f2228;font-weight:bold;">To</div>
<div class="t" style="left:766.10px;top:392.98px;font-size:14.2px;color:#1f2228;font-weight:bold;">Subject</div>
<div class="abs" style="left:851.4px;top:299.6px;width:483px;height:34.4px;border:1px solid #d3d5db;border-radius:4px"></div>
<div class="abs" style="left:851.4px;top:340.8px;width:483px;height:34.4px;border:1px solid #d3d5db;border-radius:4px"></div>
<div class="abs" style="left:851.4px;top:383.4px;width:483px;height:34.0px;border:1px solid #d3d5db;border-radius:4px"></div>
<div class="t" style="left:866.00px;top:310.15px;font-size:14px;color:#262a33;font-weight:normal;">CreativeSim@protonmail.com</div>
<svg class="abs" style="left:1313px;top:313px;" width="12" height="8" viewBox="0 0 12 8"><path d="M1.2 1.5L6 6L10.8 1.5" fill="none" stroke="#3a3d45" stroke-width="1.3"/></svg>
<svg class="abs" style="left:869.5px;top:349px;" width="12" height="16" viewBox="0 0 12 16"><path d="M3 7V4.6C3 2.8 4.3 1.5 6 1.5C7.7 1.5 9 2.8 9 4.6V7" fill="none" stroke="#3b7bdc" stroke-width="1.5"/><rect x="1" y="6.6" width="10" height="8.4" rx="1.2" fill="#3b7bdc"/></svg>
<div class="t" style="left:887.60px;top:352.35px;font-size:14px;color:#262a33;font-weight:normal;">Dr. Snow</div>
<div class="t" style="right:39.40px;top:352.35px;font-size:14px;color:#5d73d8;font-weight:bold;">CC, BCC</div>
<div class="t" style="left:868.30px;top:393.65px;font-size:14px;color:#262a33;font-weight:normal;">Annual checkup</div>
<div class="abs" style="left:766.5px;top:424.7px;width:568px;height:294px;border:1px solid #d3d5db;border-radius:4px;overflow:hidden"></div>
<div class="abs" style="left:767.5px;top:455px;width:566px;height:1px;background:#d9dbe0;"></div>
<div class="abs" style="left:827px;top:425.7px;width:1px;height:29.3px;background:#d9dbe0;"></div>
<div class="abs" style="left:876px;top:425.7px;width:1px;height:29.3px;background:#d9dbe0;"></div>
<div class="abs" style="left:926px;top:425.7px;width:1px;height:29.3px;background:#d9dbe0;"></div>
<div class="abs" style="left:1016px;top:425.7px;width:1px;height:29.3px;background:#d9dbe0;"></div>
<div class="abs" style="left:1076.8px;top:425.7px;width:1px;height:29.3px;background:#d9dbe0;"></div>
<div class="abs" style="left:1125.9px;top:425.7px;width:1px;height:29.3px;background:#d9dbe0;"></div>
<div class="abs" style="left:1216.6px;top:425.7px;width:1px;height:29.3px;background:#d9dbe0;"></div>
<div class="abs" style="left:1246.4px;top:425.7px;width:1px;height:29.3px;background:#d9dbe0;"></div>
<div class="t" style="left:773.50px;top:433.15px;font-size:14px;color:#3a3d45;font-weight:normal;">Arial</div>
<svg class="abs" style="left:809px;top:438px;" width="10" height="7" viewBox="0 0 10 7"><path d="M1 1.2L5 5.2L9 1.2" fill="none" stroke="#3a3d45" stroke-width="1.1"/></svg>
<svg class="abs" style="left:857px;top:438px;" width="10" height="7" viewBox="0 0 10 7"><path d="M1 1.2L5 5.2L9 1.2" fill="none" stroke="#3a3d45" stroke-width="1.1"/></svg>
<svg class="abs" style="left:907.5px;top:438px;" width="10" height="7" viewBox="0 0 10 7"><path d="M1 1.2L5 5.2L9 1.2" fill="none" stroke="#3a3d45" stroke-width="1.1"/></svg>
<svg class="abs" style="left:1107.5px;top:438px;" width="10" height="7" viewBox="0 0 10 7"><path d="M1 1.2L5 5.2L9 1.2" fill="none" stroke="#3a3d45" stroke-width="1.1"/></svg>
<svg class="abs" style="left:1315.5px;top:438px;" width="10" height="7" viewBox="0 0 10 7"><path d="M1 1.2L5 5.2L9 1.2" fill="none" stroke="#3a3d45" stroke-width="1.1"/></svg>
<div class="t" style="left:835.30px;top:433.15px;font-size:14px;color:#3a3d45;font-weight:normal;">14</div>
<svg class="abs" style="left:884px;top:432px;" width="14" height="16" viewBox="0 0 14 16"><g fill="none" stroke="#3a3d45" stroke-width="1.2" stroke-linecap="round" stroke-linejoin="round"><path d="M2.6 11.4L7 1.8L11.4 11.4M4.2 8H9.8"/><path d="M1.4 14.4H12.6"/></g></svg>
<svg class="abs" style="left:933px;top:432px;" width="15" height="16" viewBox="0 0 15 16"><g fill="none" stroke="#3a3d45" stroke-width="1.2" stroke-linecap="round" stroke-linejoin="round"><path d="M3.2 1.6H8.6C10.6 1.6 11.8 2.8 11.8 4.4C11.8 6 10.6 7.2 8.6 7.2H3.2ZM3.2 7.2H9.2C11.2 7.2 12.6 8.4 12.6 10.2C12.6 12 11.2 13.4 9.2 13.4H3.2ZM3.2 1.6V13.4"/><path d="M5.4 1.6V13.4"/></g></svg>
<svg class="abs" style="left:964px;top:432px;" width="12" height="16" viewBox="0 0 12 16"><g fill="none" stroke="#3a3d45" stroke-width="1.2" stroke-linecap="round" stroke-linejoin="round"><path d="M4.4 1.6H10.8M1.4 13.4H7.8M7.6 1.6L4.6 13.4"/></g></svg>
<svg class="abs" style="left:993px;top:432px;" width="15" height="16" viewBox="0 0 15 16"><g fill="none" stroke="#3a3d45" stroke-width="1.2" stroke-linecap="round" stroke-linejoin="round"><path d="M3.4 1.6V7.4C3.4 9.6 5.2 11 7.4 11C9.6 11 11.4 9.6 11.4 7.4V1.6"/><path d="M2 14.2H12.8"/></g></svg>
<svg class="abs" style="left:1023px;top:432px;" width="16" height="16" viewBox="0 0 16 16"><g fill="none" stroke="#3a3d45" stroke-width="1.2" stroke-linecap="round" stroke-linejoin="round"><circle cx="2.6" cy="3" r="1" fill="#3a3d45"/><circle cx="2.6" cy="8" r="1" fill="#3a3d45"/><circle cx="2.6" cy="13" r="1" fill="#3a3d45"/><path d="M6 3H14.4M6 8H14.4M6 13H14.4"/></g></svg>
<svg class="abs" style="left:1053px;top:432px;" width="16" height="16" viewBox="0 0 16 16"><g fill="none" stroke="#3a3d45" stroke-width="1.2" stroke-linecap="round" stroke-linejoin="round"><path d="M6 3H14.4M6 8H14.4M6 13H14.4"/><path d="M1.8 2.4V3.6M1.8 7.4V8.6M1.8 12.4V13.6" stroke-width="1.1"/></g></svg>
<svg class="abs" style="left:1083px;top:433px;" width="15" height="14" viewBox="0 0 15 14"><g fill="none" stroke="#3a3d45" stroke-width="1.2" stroke-linecap="round" stroke-linejoin="round"><path d="M1.6 2H13.4M1.6 6H9.4M1.6 10H13.4M1.6 14H9.4" transform="scale(1 0.9)"/></g></svg>
<svg class="abs" style="left:1132px;top:432px;" width="17" height="16" viewBox="0 0 17 16"><g fill="none" stroke="#3a3d45" stroke-width="1.2" stroke-linecap="round" stroke-linejoin="round"><circle cx="4.2" cy="5.4" r="2.6"/><path d="M6.8 5.4V7.6C6.8 10 5.6 11.8 3.4 12.8"/><circle cx="11.6" cy="5.4" r="2.6"/><path d="M14.2 5.4V7.6C14.2 10 13 11.8 10.8 12.8"/></g></svg>
<svg class="abs" style="left:1163px;top:432px;" width="16" height="16" viewBox="0 0 16 16"><g fill="none" stroke="#3a3d45" stroke-width="1.2" stroke-linecap="round" stroke-linejoin="round"><path d="M6.6 9.4L9.4 6.6"/><path d="M8 4.4L9.6 2.8C10.8 1.6 12.6 1.6 13.6 2.6C14.6 3.6 14.6 5.4 13.4 6.6L11.6 8.4"/><path d="M8 11.6L6.4 13.2C5.2 14.4 3.4 14.4 2.4 13.4C1.4 12.4 1.4 10.6 2.6 9.4L4.4 7.6"/></g></svg>
<svg class="abs" style="left:1192px;top:432px;" width="17" height="16" viewBox="0 0 17 16"><g fill="none" stroke="#3a3d45" stroke-width="1.2" stroke-linecap="round" stroke-linejoin="round"><path d="M5 12.4L2.2 9.6C1.6 9 1.6 8.2 2.2 7.6L8.4 1.4C9 0.8 9.8 0.8 10.4 1.4L14 5C14.6 5.6 14.6 6.4 14 7L8.8 12.4Z"/><path d="M5.6 4.2L11.2 9.8"/><path d="M1.6 14.6H14.6"/></g></svg>
<svg class="abs" style="left:1224px;top:432px;" width="15" height="16" viewBox="0 0 15 16"><g fill="none" stroke="#3a3d45" stroke-width="1.2" stroke-linecap="round" stroke-linejoin="round"><path d="M2 1.6H9.4L13 5.2V14.4H2Z"/><path d="M9.2 1.6V5.4H13"/><circle cx="6.2" cy="7.6" r="1.2"/><path d="M3.4 12.6L6 10.4L8 11.8L10 9.8L11.8 11.6"/></g></svg>
<div class="t" style="left:774.40px;top:469.48px;font-size:13.85px;color:#222;font-weight:normal;">Hello Dr. Snow,</div>
<div class="t" style="left:774.40px;top:515.28px;font-size:13.85px;color:#222;font-weight:normal;">Seeing you on Broad Street reminded me I need to schedule my annual checkup.</div>
<div class="t" style="left:774.40px;top:537.78px;font-size:13.85px;color:#222;font-weight:normal;">What dates are you available?</div>
<div class="t" style="left:774.40px;top:582.88px;font-size:13.85px;color:#222;font-weight:normal;">I have attached the health history file you asked me for.</div>
<div class="t" style="left:774.40px;top:626.88px;font-size:15.85px;color:#222;font-weight:bold;">CS</div>
<div class="t" style="left:774.40px;top:651.48px;font-size:13.85px;color:#222;font-weight:normal;">Sent with <span style="color:#5b6fd6;text-decoration:underline">ProtonMail</span> Secure Email.</div>
<div class="abs" style="left:1325.5px;top:458.3px;width:6.5px;height:204px;background:#b7b8bc;border-radius:3px"></div>
<div class="abs" style="left:767.5px;top:683.8px;width:566px;height:34px;background:#f3f4f6;"></div>
<div class="abs" style="left:767.5px;top:683.8px;width:566px;height:1px;background:#e1e2e6;"></div>
<div class="t" style="left:774.40px;top:694.85px;font-size:14px;color:#262a33;font-weight:bold;letter-spacing:0.3px">522.09 KB</div>
<svg class="abs" style="left:851.5px;top:694px;" width="15" height="15" viewBox="0 0 15 15"><path d="M12.4 6.6L7.2 11.8C5.9 13.1 3.8 13.1 2.6 11.8C1.3 10.5 1.3 8.5 2.6 7.2L8 1.8C8.9 0.9 10.3 0.9 11.2 1.8C12.1 2.7 12.1 4.1 11.2 5L6 10.2C5.5 10.7 4.8 10.7 4.3 10.2C3.8 9.7 3.8 9 4.3 8.5L9 3.8" fill="none" stroke="#3a3d45" stroke-width="1.1" stroke-linecap="round"/></svg>
<div class="t" style="left:871.50px;top:694.85px;font-size:14px;color:#262a33;font-weight:normal;">1 file attached</div>
<div class="t" style="right:39.40px;top:694.85px;font-size:14px;color:#6a7ee0;font-weight:normal;">Show</div>
<div class="abs" style="left:766.1px;top:726.4px;width:35px;height:33.5px;border:1px solid #7083e0;border-radius:4px;background:#fff"></div>
<svg class="abs" style="left:776px;top:735px;" width="15" height="15" viewBox="0 0 15 15"><path d="M12.4 6.6L7.2 11.8C5.9 13.1 3.8 13.1 2.6 11.8C1.3 10.5 1.3 8.5 2.6 7.2L8 1.8C8.9 0.9 10.3 0.9 11.2 1.8C12.1 2.7 12.1 4.1 11.2 5L6 10.2C5.5 10.7 4.8 10.7 4.3 10.2C3.8 9.7 3.8 9 4.3 8.5L9 3.8" fill="none" stroke="#7a8ee6" stroke-width="1.1" stroke-linecap="round"/></svg>
<div class="abs" style="left:808.7px;top:726.4px;width:35.5px;height:33.5px;border:1px solid #d3d5db;border-radius:4px;background:#fff"></div>
<div class="abs" style="left:851.4px;top:726.4px;width:35.5px;height:33.5px;border:1px solid #d3d5db;border-radius:4px;background:#fff"></div>
<div class="abs" style="left:1199.7px;top:726.4px;width:35.5px;height:33.5px;border:1px solid #d3d5db;border-radius:4px;background:#fff"></div>
<svg class="abs" style="left:820px;top:736px;" width="12" height="14" viewBox="0 0 12 14"><g fill="none" stroke="#3a3d45" stroke-width="1.2" stroke-linecap="round" stroke-linejoin="round"><path d="M1.4 1.4H10.6M1.4 12.6H10.6M2.6 1.4C2.6 4.4 6 5.2 6 7C6 8.8 2.6 9.6 2.6 12.6M9.4 1.4C9.4 4.4 6 5.2 6 7C6 8.8 9.4 9.6 9.4 12.6"/></g></svg>
<svg class="abs" style="left:862.5px;top:737px;" width="13" height="13" viewBox="0 0 13 13"><g fill="none" stroke="#3a3d45" stroke-width="1.2" stroke-linecap="round" stroke-linejoin="round"><path d="M3.6 5.6V4C3.6 2.6 4.8 1.4 6.5 1.4C8.2 1.4 9.4 2.6 9.4 4V5.6"/><rect x="2" y="5.6" width="9" height="6.8" rx="1"/><path d="M6.5 8.2V9.6"/></g></svg>
<div class="t" style="right:173.70px;top:736.65px;font-size:14px;color:#3a3d45;font-weight:normal;">Saved on Tuesday</div>
<svg class="abs" style="left:1210.5px;top:736px;" width="15" height="15" viewBox="0 0 15 15"><g fill="none" stroke="#3a3d45" stroke-width="1.2" stroke-linecap="round" stroke-linejoin="round"><path d="M1.4 3.4H13.6"/><path d="M5 3.4V1.4H10V3.4"/><path d="M2.8 3.4L3.4 14H11.6L12.2 3.4"/><path d="M6 6.4V11.2M9 6.4V11.2"/></g></svg>
<div class="abs" style="left:1242.3px;top:726.4px;width:92px;height:33.5px;background:#6a7de0;border-radius:4px"></div>
<div class="t" style="left:1288.30px;transform:translateX(-50%);top:736.41px;font-size:14.4px;color:#fff;font-weight:normal;">Send</div>
<div class="abs" style="left:0px;top:767px;width:1366px;height:1px;background:linear-gradient(90deg,rgba(90,70,170,0.45),rgba(160,60,130,0.5) 50%,rgba(190,40,100,0.55));"></div>
<svg class="abs" style="left:0px;top:763px;" width="5" height="5" viewBox="0 0 5 5"><path d="M0 0V5H5C2.2 5 0 2.8 0 0Z" fill="#4b3a86" opacity="0.8"/></svg>
<svg class="abs" style="left:1361px;top:763px;" width="5" height="5" viewBox="0 0 5 5"><path d="M5 0V5H0C2.8 5 5 2.8 5 0Z" fill="#b82a68"/></svg>
</body></html>
